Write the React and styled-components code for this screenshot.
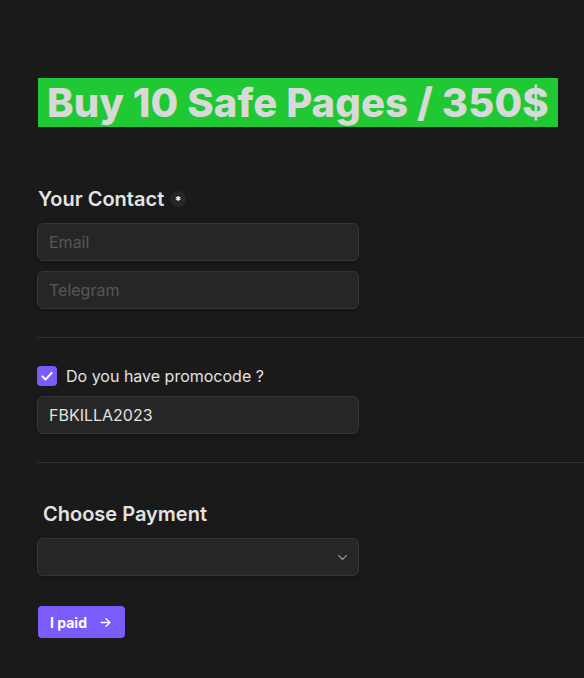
import React from "react";
import styled, { createGlobalStyle } from "styled-components";

const GlobalStyle = createGlobalStyle`
  html, body {
    margin: 0;
    padding: 0;
    background: #1a1a1a;
    font-family: Inter, "Liberation Sans", sans-serif;
    color: #e0e0e0;
  }
`;

const Page = styled.div`
  min-height: 678px;
  background: #1a1a1a;
  padding: 78px 0 40px 37px;
  box-sizing: border-box;
  overflow: hidden;
`;

const Banner = styled.h1`
  display: inline-block;
  margin: 0 0 0 1px;
  background: #20c934;
  color: #d9d9d9;
  font-size: 40px;
  font-weight: 800;
  line-height: 49px;
  padding: 0 9px 0 9px;
  letter-spacing: 0.1px;
  white-space: nowrap;
`;

const Section = styled.section`
  display: flex;
  flex-direction: column;
  gap: 10px;
  margin-top: ${(p) => p.$top || 0}px;
`;

const Heading = styled.h2`
  display: flex;
  align-items: center;
  gap: 6px;
  margin: 0 0 2px ${(p) => p.$indent || 1}px;
  font-size: 20px;
  font-weight: 600;
  color: #e3e3e3;
  line-height: 24px;
`;

const Required = styled.span`
  width: 16px;
  height: 16px;
  border-radius: 50%;
  background: #262626;
  color: #fff;
  font-size: 12px;
  font-weight: 700;
  display: flex;
  align-items: center;
  justify-content: center;
  line-height: 1;
  padding-top: 3px;
  box-sizing: border-box;
`;

const Input = styled.input`
  width: 322px;
  height: 38px;
  box-sizing: border-box;
  background: #262626;
  border: 1px solid #363636;
  border-radius: 6px;
  padding: 0 11px;
  font-family: Inter, "Liberation Sans", sans-serif;
  font-size: 16px;
  color: #e2e2e2;
  box-shadow: 0 2px 4px rgba(0, 0, 0, 0.25);
  outline: none;

  &::placeholder {
    color: #575757;
  }
`;

const Divider = styled.hr`
  border: none;
  border-top: 1px solid #323232;
  margin: ${(p) => p.$top}px 0 ${(p) => p.$bottom}px;
`;

const CheckRow = styled.label`
  display: flex;
  align-items: center;
  gap: 9px;
  font-size: 16px;
  color: #e2e2e2;
`;

const Box = styled.span`
  width: 20px;
  height: 20px;
  border-radius: 4px;
  background: #7b5cfa;
  display: flex;
  align-items: center;
  justify-content: center;
`;

const Select = styled.div`
  width: 322px;
  height: 38px;
  box-sizing: border-box;
  background: #262626;
  border: 1px solid #363636;
  border-radius: 6px;
  box-shadow: 0 2px 4px rgba(0, 0, 0, 0.25);
  display: flex;
  align-items: center;
  justify-content: flex-end;
  padding-right: 8px;
`;

const Button = styled.button`
  margin-top: 20px;
  margin-left: 1px;
  align-self: flex-start;
  height: 32px;
  width: 87px;
  border: none;
  border-radius: 4px;
  background: #7b5cfa;
  color: #fff;
  font-family: Inter, "Liberation Sans", sans-serif;
  font-size: 14px;
  font-weight: 700;
  display: flex;
  align-items: center;
  gap: 12px;
  padding: 0 0 0 12px;
`;

export default function App() {
  return (
    <>
      <GlobalStyle />
      <Page>
        <Banner>Buy 10 Safe Pages / 350$</Banner>

        <Section $top={60}>
          <Heading>
            Your Contact <Required>*</Required>
          </Heading>
          <Input placeholder="Email" />
          <Input placeholder="Telegram" />
        </Section>

        <Divider $top={28} $bottom={28} />

        <Section>
          <CheckRow>
            <Box>
              <svg width="14" height="14" viewBox="0 0 24 24" fill="none" stroke="#fff" strokeWidth="3.2" strokeLinecap="round" strokeLinejoin="round">
                <polyline points="4 12.5 9.5 18 20 6.5" />
              </svg>
            </Box>
            Do you have promocode ?
          </CheckRow>
          <Input defaultValue="FBKILLA2023" />
        </Section>

        <Divider $top={28} $bottom={39} />

        <Section>
          <Heading $indent={6}>Choose Payment</Heading>
          <Select>
            <svg width="15" height="15" viewBox="0 0 24 24" fill="none" stroke="#9a9a9a" strokeWidth="2.2" strokeLinecap="round" strokeLinejoin="round">
              <polyline points="6 9 12 15 18 9" />
            </svg>
          </Select>
          <Button>
            I paid
            <svg width="13" height="13" viewBox="0 0 24 24" fill="none" stroke="#fff" strokeWidth="2.4" strokeLinecap="round" strokeLinejoin="round">
              <line x1="4" y1="12" x2="20" y2="12" />
              <polyline points="13 5 20 12 13 19" />
            </svg>
          </Button>
        </Section>
      </Page>
    </>
  );
}
